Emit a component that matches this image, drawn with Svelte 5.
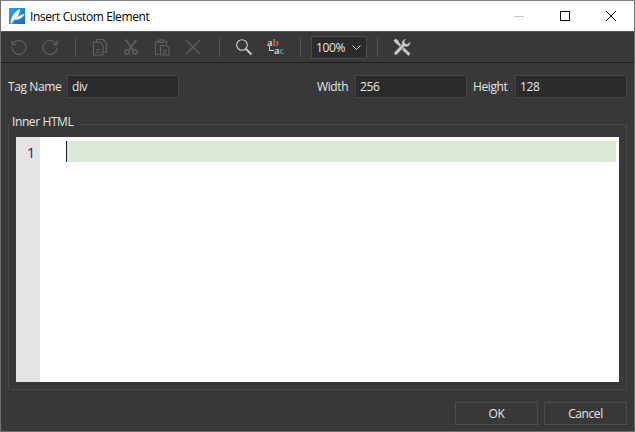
<script>
  const zoomLabel = '100%';
</script>

<div class="window">
  <header class="titlebar">
    <svg class="logo" viewBox="0 0 16 16" width="16" height="16">
      <defs><linearGradient id="lg" x1="0" y1="0" x2="1" y2="1"><stop offset="0" stop-color="#2aa4ee"/><stop offset="1" stop-color="#0a74c4"/></linearGradient></defs>
      <rect width="16" height="16" fill="url(#lg)"/>
      <path d="M1.500 15.500 C2 9 5 3.500 11 1 C11 5 9.500 8 7 10 C9.500 8 12 6.500 15.500 6 C14 9.500 10.500 12 6 11.500 C4.500 12.500 3.500 14 3 15.500Z" fill="#eef8fe"/>
    </svg>
    <span class="title">Insert Custom Element</span>
    <div class="wincontrols">
      <span class="wc"><svg width="12" height="12" viewBox="0 0 12 12"><path d="M1 6.500H11" stroke="#c4c4c4"/></svg></span>
      <span class="wc"><svg width="12" height="12" viewBox="0 0 12 12"><rect x="1.500" y="1.500" width="9" height="9" fill="none" stroke="#000"/></svg></span>
      <span class="wc"><svg width="12" height="12" viewBox="0 0 12 12"><path d="M1 1L11 11M11 1L1 11" stroke="#000" fill="none"/></svg></span>
    </div>
  </header>

  <div class="toolbar">
    <span class="tb undo"><svg viewBox="0 0 18 18" width="18" height="18" fill="none" stroke="#5c5c5c" stroke-width="1.300"><path d="M3 9.500a7 7 0 1 0 2.300-5.200L2.800 6.700M2.800 2.500v4.200H7"/></svg></span>
    <span class="tb"><svg viewBox="0 0 18 18" width="18" height="18" fill="none" stroke="#5c5c5c" stroke-width="1.300"><path d="M15 9.500a7 7 0 1 1-2.300-5.200L15.200 6.700M15.200 2.500v4.200H11"/></svg></span>
    <span class="sep s1"></span>
    <span class="tb"><svg viewBox="0 0 18 18" width="18" height="18" fill="none" stroke="#5e5e5e" stroke-width="1.200"><path d="M5.500 3.500V1.500h6.500l3.500 3.500v9.500h-3.500M2.500 4h6.500l3 3v10H2.500zM5 11.500h4.500M5 14h4.500"/></svg></span>
    <span class="tb"><svg viewBox="0 0 18 18" width="18" height="18" fill="none" stroke="#5e5e5e" stroke-width="1.800"><path d="M3.500 1.500L11 12M14.500 1.500L7 12"/><circle cx="5" cy="14" r="2.200" stroke-width="1.500"/><circle cx="13" cy="14" r="2.200" stroke-width="1.500"/></svg></span>
    <span class="tb"><svg viewBox="0 0 18 18" width="18" height="18" fill="none" stroke="#5e5e5e" stroke-width="1.200"><path d="M5 3.500H2.500v13h4M11 3.500h2.500v3M5.500 2h5v2.500h-5zM7.500 7.500h6l2.500 2.500v7H7.500zM9.500 12.500h4.500M9.500 15h4.500"/></svg></span>
    <span class="tb"><svg viewBox="0 0 18 18" width="18" height="18" fill="none" stroke="#5e5e5e" stroke-width="1.300"><path d="M2 2L16 16M16 2L2 16"/></svg></span>
    <span class="sep s2"></span>
    <span class="tb"><svg viewBox="0 0 18 18" width="18" height="18" fill="none" stroke="#cfcfcf"><circle cx="8" cy="7" r="5.300" stroke-width="1.100"/><path d="M12 11L17.500 16.500" stroke-width="1.800"/></svg></span>
    <span class="tb abc"><span class="ab"><b class="a">a</b><b class="b">b</b></span><span class="ac"><i class="hook"></i><b class="a2">a</b><b class="c">c</b></span></span>
    <span class="sep s3"></span>
    <div class="zoom"><span>{zoomLabel}</span><svg width="9" height="5" viewBox="0 0 9 5"><path d="M.5.500L4.500 4.500L8.500.500" stroke="#d0d0d0" fill="none"/></svg></div>
    <span class="sep s4"></span>
    <span class="tb"><svg viewBox="0 0 18 18" width="18" height="18"><path d="M1 2.500L2.500 1L5 2.500L6 5L11 10L17 15.500L15.500 17.500L9.500 12L4.500 6L2.500 5Z" fill="#c8c8c8" stroke="#c8c8c8" stroke-width=".6"/><path d="M17.500 4a4.500 4.500 0 0 1-6 4.800L4.200 16.500a1.800 1.800 0 0 1-2.700-2.500L8.800 6.500A4.500 4.500 0 0 1 13.800.8L11.500 3.300L12.200 5.400L14.500 6L17 3.500Z" fill="#c8c8c8" stroke="#383838" stroke-width=".7"/></svg></span>
  </div>

  <div class="fields">
    <label class="field"><span class="w-tag">Tag Name</span><input class="box" value="div" /></label>
    <div class="dims">
      <label class="field"><span class="w-width">Width</span><input class="box" value="256" /></label>
      <label class="field"><span class="w-height">Height</span><input class="box" value="128" /></label>
    </div>
  </div>

  <fieldset class="group">
    <legend>Inner HTML</legend>
    <div class="editor">
      <div class="gutter">1</div>
      <div class="code"><div class="line"><i class="caret"></i><div class="hl"></div></div></div>
    </div>
  </fieldset>

  <footer class="actions">
    <button>OK</button>
    <button>Cancel</button>
  </footer>
</div>

<style>
  :global(body) { margin: 0; background: #383838; }
  .window {
    box-sizing: border-box;
    width: 635px;
    height: 432px;
    display: flex;
    flex-direction: column;
    background: #383838;
    border: 1px solid #6f6f6f;
    border-top-color: #7f7f7f;
    font-family: "Open Sans", "Noto Sans", sans-serif;
    font-size: 12px;
    letter-spacing: -.4px;
    color: #e6e6e6;
    overflow: hidden;
  }
  .titlebar {
    height: 31px;
    box-sizing: border-box;
    flex: none;
    background: #fff;
    color: #000;
    display: flex;
    align-items: center;
    padding-left: 8px;
    border-bottom: 1px solid #555;
  }
  .logo { margin-right: 5px; }
  .wincontrols { margin-left: auto; display: flex; }
  .wc { width: 46px; height: 29px; display: flex; align-items: center; justify-content: center; }
  .toolbar {
    height: 31px;
    flex: none;
    box-sizing: border-box;
    display: flex;
    align-items: center;
    padding-left: 8px;
    border-bottom: 1px solid #1f1f1f;
    margin-right: 1px;
  }
  .tb { width: 18px; height: 18px; display: flex; margin-right: 13px; flex: none; position: relative; }
  .undo { margin-right: 15px; }
  .sep { width: 1px; height: 20px; background: #555; flex: none; }
  .s1 { margin: 0 15px 0 2px; }
  .s2 { margin: 0 14px 0 4px; }
  .s3 { margin: 0 10px 0 4px; }
  .s4 { margin: 0 15px 0 10px; }
  .abc { font: 11px/8px "Liberation Serif", serif; flex-direction: column; letter-spacing: 0; padding: 0 0 0 2px; box-sizing: border-box; }
  .ab { height: 7px; line-height: 8px; }
  .a, .a2 { color: #cbcbcb; }
  .b { color: #d9603a; }
  .ac { padding-left: 7px; position: relative; height: 8px; margin-top: 1px; }
  .hook { position: absolute; left: 2px; top: 0; width: 4px; height: 4px; border-left: 1px solid #ccc; border-bottom: 1px solid #ccc; }
  .c { color: #1b9fdb; }
  .zoom {
    box-sizing: border-box;
    width: 56px; height: 23px;
    background: #2b2b2b;
    border: 1px solid #4a4a4a;
    display: flex; align-items: center; justify-content: space-between;
    padding: 0 5px 0 4px;
    flex: none;
  }
  .fields {
    flex: none;
    display: flex;
    justify-content: space-between;
    padding: 12px 7px 0 7px;
  }
  .dims { display: flex; gap: 6px; }
  .field { display: flex; align-items: center; gap: 6px; }
  .field span { white-space: nowrap; }
  .w-tag { width: 53px; }
  .w-width { width: 32px; }
  .w-height { width: 36px; }
  .box {
    box-sizing: border-box;
    width: 112px;
    height: 23px;
    background: #2b2b2b;
    border: 1px solid #454545;
    color: #e6e6e6;
    font: inherit;
    letter-spacing: inherit;
    padding: 0 4px;
    outline: none;
  }
  .group {
    flex: 1;
    min-height: 0;
    min-width: 0;
    margin: 17px 7px 0 7px;
    padding: 0 7px 7px 7px;
    border: 1px solid #484848;
    display: flex;
  }
  legend { padding: 0 6px 4px 3px; margin-left: -7px; line-height: 14px; height: 14px; }
  .editor { flex: 1; display: flex; background: #fff; margin-top: 4px; }
  .gutter {
    width: 24px;
    background: #e4e4e4;
    color: #0a2f8a;
    font: 15px/30px "Open Sans", sans-serif;
    text-align: right;
    padding-right: 5px;
    box-sizing: border-box;
  }
  .code { flex: 1; padding: 4px 3px 0 26px; }
  .line { display: flex; height: 21px; }
  .caret { width: 1px; background: #1a1a33; flex: none; }
  .hl { flex: 1; background: #d9e9d5; }
  .actions {
    flex: none;
    display: flex;
    justify-content: flex-end;
    gap: 6px;
    padding: 12px 7px 6px 0;
  }
  button {
    width: 83px; height: 23px;
    box-sizing: border-box;
    background: #383838;
    border: 1px solid #4c4c4c;
    color: #e6e6e6;
    font: inherit;
    letter-spacing: inherit;
    padding: 0;
  }
</style>
